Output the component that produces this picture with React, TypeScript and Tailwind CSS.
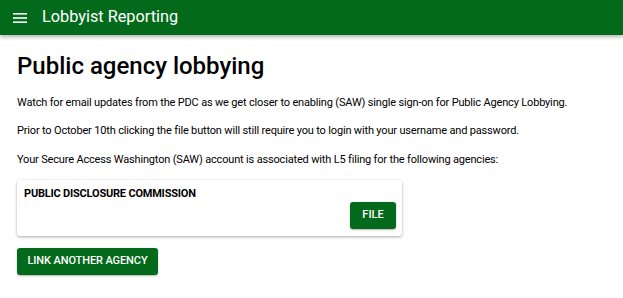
export default function App() {
  return (
    <div className="min-h-screen bg-white font-['Roboto',sans-serif] text-black">
      {/* Top bar */}
      <header className="h-[35px] bg-[#046a1b] flex items-center pl-[13px] gap-[15px] shadow-[0_2px_4px_rgba(0,0,0,0.3)]">
        <svg width="14" height="10" viewBox="0 0 14 10" fill="white">
          <rect x="0" y="0" width="14" height="1.6" />
          <rect x="0" y="4.2" width="14" height="1.6" />
          <rect x="0" y="8.4" width="14" height="1.6" />
        </svg>
        <span className="text-white text-[16.3px] leading-none">Lobbyist Reporting</span>
      </header>

      <main className="px-[17px]">
        <h1 className="text-[24px] font-medium leading-none mt-[19px] mb-[18px]">Public agency lobbying</h1>
        <p className="text-[11px] leading-[14px] tracking-[-0.17px] mb-[14px] whitespace-nowrap">
          Watch for email updates from the PDC as we get closer to enabling (SAW) single sign-on for Public Agency Lobbying.
        </p>
        <p className="text-[11px] leading-[14px] tracking-[-0.17px] mb-[15px] whitespace-nowrap">
          Prior to October 10th clicking the file button will still require you to login with your username and password.
        </p>
        <p className="text-[11px] leading-[14px] tracking-[-0.17px] mb-[13px] whitespace-nowrap">
          Your Secure Access Washington (SAW) account is associated with L5 filing for the following agencies:
        </p>

        {/* Agency card */}
        <div className="w-[385px] rounded-[3px] shadow-[0_1px_3px_rgba(0,0,0,0.35)] pl-[7px] pr-[6px] pt-[7px] pb-[7px] flex flex-col">
          <div className="text-[11px] font-bold leading-[13px] tracking-[-0.2px]">PUBLIC DISCLOSURE COMMISSION</div>
          <div className="flex justify-end mt-[2px]">
            <button className="h-[27px] w-[46px] rounded-[3px] bg-[#046a1b] text-white text-[11px] font-medium shadow-[0_1px_2px_rgba(0,0,0,0.3)]">
              FILE
            </button>
          </div>
        </div>

        <button className="mt-[12px] h-[27px] w-[141px] rounded-[3px] bg-[#046a1b] text-white text-[11px] font-medium tracking-[-0.1px] shadow-[0_1px_2px_rgba(0,0,0,0.3)]">
          LINK ANOTHER AGENCY
        </button>
      </main>
    </div>
  );
}
